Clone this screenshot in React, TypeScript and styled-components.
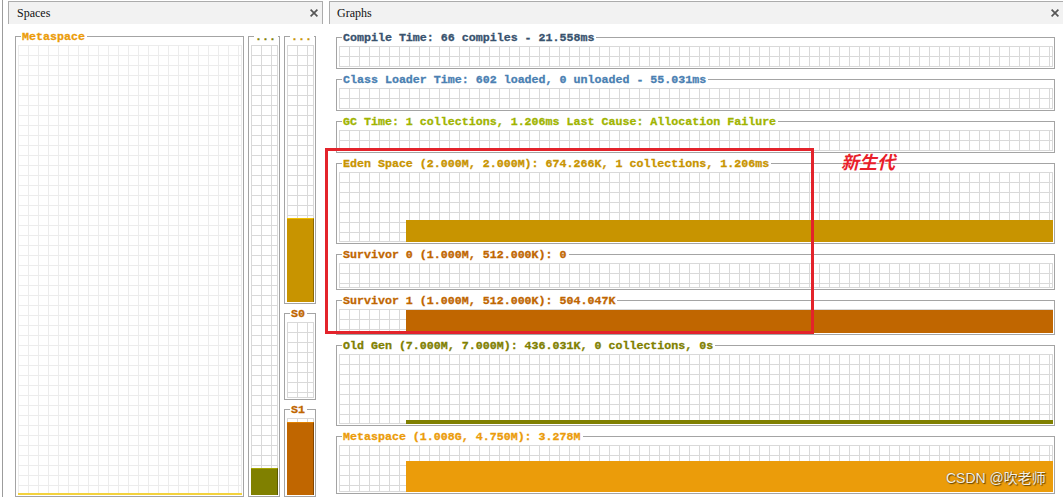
import styled, { createGlobalStyle } from "styled-components";

const GlobalStyle = createGlobalStyle`
  html, body {
    margin: 0;
    padding: 0;
    background: #fff;
    overflow: hidden;
  }
  #root {
    width: 1063px;
    height: 497px;
    overflow: hidden;
  }
`;

// whole tool window, thin line at the far left edge
const Window = styled.div`
  position: relative;
  display: flex;
  height: 497px;
  margin-left: 2px;
  padding-top: 1px;
  border-left: 1px solid #9c9c9c;
  box-sizing: border-box;
`;

const Panel = styled.section<{ $w: number; $gap?: number }>`
  flex: 0 0 ${(p) => p.$w}px;
  display: flex;
  flex-direction: column;
  margin-left: ${(p) => p.$gap ?? 0}px;
  min-height: 0;
`;

const Tab = styled.header<{ $indent: number; $pad: number }>`
  display: flex;
  align-items: center;
  justify-content: space-between;
  height: 23px;
  box-sizing: border-box;
  margin-left: ${(p) => p.$indent}px;
  padding: 0 4px 0 ${(p) => p.$pad}px;
  border: 1px solid #acacac;
  border-bottom: none;
  background: #f2f2f2;
`;

const TabTitle = styled.span`
  font-family: "Liberation Serif", serif;
  font-size: 12px;
  line-height: 22px;
  color: #111;
`;

const Close = () => (
  <svg width="8" height="8" viewBox="0 0 8 8">
    <path d="M0.6 0.6 L7.4 7.4 M7.4 0.6 L0.6 7.4" stroke="#555" strokeWidth="1.7" />
  </svg>
);

const SpacesBody = styled.div`
  flex: 1;
  display: flex;
  gap: 4px;
  padding: 12px 0 0 12px;
  min-height: 0;
`;

const Column = styled.div<{ $w: number }>`
  flex: 0 0 ${(p) => p.$w}px;
  display: flex;
  flex-direction: column;
  gap: 9px;
`;

const GraphsBody = styled.div`
  display: flex;
  flex-direction: column;
  gap: 10px;
  padding: 13px 9px 0 7px;
`;

// titled group box: the title sits on the top border line
const Group = styled.div<{ $h?: number; $fill?: boolean }>`
  display: flex;
  flex-direction: column;
  flex: ${(p) => (p.$h ? `0 0 ${p.$h}px` : p.$fill ? "1" : "none")};
  box-sizing: border-box;
  padding: 0 1px 1px 2px;
  border: 1px solid #a4a4a4;
  min-height: 0;
`;

const GroupTitle = styled.span<{ $color: string }>`
  align-self: flex-start;
  margin: -6px 0 2px 3px;
  padding: 0 2px 0 1px;
  height: 12px;
  background: #fff;
  color: ${(p) => p.$color};
  font-family: "Liberation Mono", monospace;
  font-weight: bold;
  font-size: 11.65px;
  line-height: 12px;
  white-space: nowrap;
  -webkit-text-stroke: 0.3px ${(p) => p.$color};
`;

// grid drawing with the filled level aligned to its bottom
const Chart = styled.div<{ $h?: number; $line: string; $offset?: number }>`
  display: flex;
  align-items: flex-end;
  flex: ${(p) => (p.$h ? `0 0 ${p.$h}px` : "1")};
  padding-left: ${(p) => p.$offset ?? 0}px;
  background-color: #fff;
  background-image: linear-gradient(to right, ${(p) => p.$line} 1px, transparent 1px),
    linear-gradient(to bottom, ${(p) => p.$line} 1px, transparent 1px);
  background-size: 10px 10px;
  box-shadow: inset -1px -1px 0 ${(p) => p.$line};
  min-height: 0;
`;

const Level = styled.div<{ $h: number; $color: string; $light?: string; $dark?: string }>`
  flex: 1;
  height: ${(p) => p.$h}px;
  box-sizing: border-box;
  background: ${(p) => p.$color};
  ${(p) => (p.$light ? `border-top: 1px solid ${p.$light};` : "")}
  ${(p) => (p.$dark ? `border-right: 1px solid ${p.$dark};` : "")}
`;

// annotations drawn over the screenshot
const Highlight = styled.div`
  position: absolute;
  left: 322px;
  top: 148px;
  width: 489px;
  height: 186px;
  box-sizing: border-box;
  border: 3px solid #e3232b;
  pointer-events: none;
`;

const Note = styled.div`
  position: absolute;
  left: 838px;
  top: 151px;
  font-family: "Noto Sans CJK SC", sans-serif;
  font-size: 18px;
  line-height: 20px;
  font-weight: bold;
  font-style: italic;
  color: #e8202a;
  text-shadow: 0 0 2px #fff, 0 0 2px #fff;
`;

const Watermark = styled.div`
  position: absolute;
  left: 943px;
  top: 470px;
  font-family: "Liberation Sans", "Noto Sans CJK SC", sans-serif;
  font-size: 14px;
  line-height: 16px;
  color: #f6f1e6;
  text-shadow: 1px 1px 1px rgba(60, 40, 0, 0.75), 0 0 1px rgba(60, 40, 0, 0.6);
`;

const LIGHT_GRID = "#ececec";
const GRID = "#d9d9d9";

type Graph = {
  title: string;
  color: string;
  h: number;
  level?: { h: number; color: string };
};

const graphs: Graph[] = [
  { title: "Compile Time: 66 compiles - 21.558ms", color: "#38526e", h: 21 },
  { title: "Class Loader Time: 602 loaded, 0 unloaded - 55.031ms", color: "#4a80b2", h: 21 },
  { title: "GC Time: 1 collections, 1.206ms Last Cause: Allocation Failure", color: "#a0b400", h: 21 },
  {
    title: "Eden Space (2.000M, 2.000M): 674.266K, 1 collections, 1.206ms",
    color: "#c89400",
    h: 70,
    level: { h: 22, color: "#c89400" },
  },
  { title: "Survivor 0 (1.000M, 512.000K): 0", color: "#c06600", h: 25 },
  {
    title: "Survivor 1 (1.000M, 512.000K): 504.047K",
    color: "#c06600",
    h: 24,
    level: { h: 23, color: "#c06600" },
  },
  {
    title: "Old Gen (7.000M, 7.000M): 436.031K, 0 collections, 0s",
    color: "#808000",
    h: 70,
    level: { h: 4, color: "#808000" },
  },
  {
    title: "Metaspace (1.008G, 4.750M): 3.278M",
    color: "#eb9c0a",
    h: 47,
    level: { h: 31, color: "#eb9c0a" },
  },
];

export default function App() {
  return (
    <>
      <GlobalStyle />
      <Window>
        <Panel $w={320}>
          <Tab $indent={5} $pad={8}>
            <TabTitle>Spaces</TabTitle>
            <Close />
          </Tab>
          <SpacesBody>
            <Column $w={229}>
              <Group $fill>
                <GroupTitle $color="#eb9c0a">Metaspace</GroupTitle>
                <Chart $line={LIGHT_GRID}>
                  <Level $h={2} $color="#f3d23e" />
                </Chart>
              </Group>
            </Column>
            <Column $w={32}>
              <Group $fill>
                <GroupTitle $color="#808000">...</GroupTitle>
                <Chart $line={GRID}>
                  <Level $h={27} $color="#808000" $light="#a6a600" $dark="#5a5a00" />
                </Chart>
              </Group>
            </Column>
            <Column $w={32}>
              <Group $fill>
                <GroupTitle $color="#c89400">...</GroupTitle>
                <Chart $line={GRID}>
                  <Level $h={84} $color="#c89400" $light="#f0c000" $dark="#8c6800" />
                </Chart>
              </Group>
              <Group $h={87}>
                <GroupTitle $color="#c06600">S0</GroupTitle>
                <Chart $line={GRID} />
              </Group>
              <Group $h={88}>
                <GroupTitle $color="#c06600">S1</GroupTitle>
                <Chart $line={GRID}>
                  <Level $h={73} $color="#c06600" $light="#e08000" $dark="#844600" />
                </Chart>
              </Group>
            </Column>
          </SpacesBody>
        </Panel>

        <Panel $w={735} $gap={6}>
          <Tab $indent={0} $pad={7}>
            <TabTitle>Graphs</TabTitle>
            <Close />
          </Tab>
          <GraphsBody>
            {graphs.map((g) => (
              <Group key={g.title}>
                <GroupTitle $color={g.color}>{g.title}</GroupTitle>
                <Chart $h={g.h} $line={GRID} $offset={67}>
                  {g.level && <Level $h={g.level.h} $color={g.level.color} />}
                </Chart>
              </Group>
            ))}
          </GraphsBody>
        </Panel>

        <Highlight />
        <Note>新生代</Note>
        <Watermark>CSDN @吹老师</Watermark>
      </Window>
    </>
  );
}
